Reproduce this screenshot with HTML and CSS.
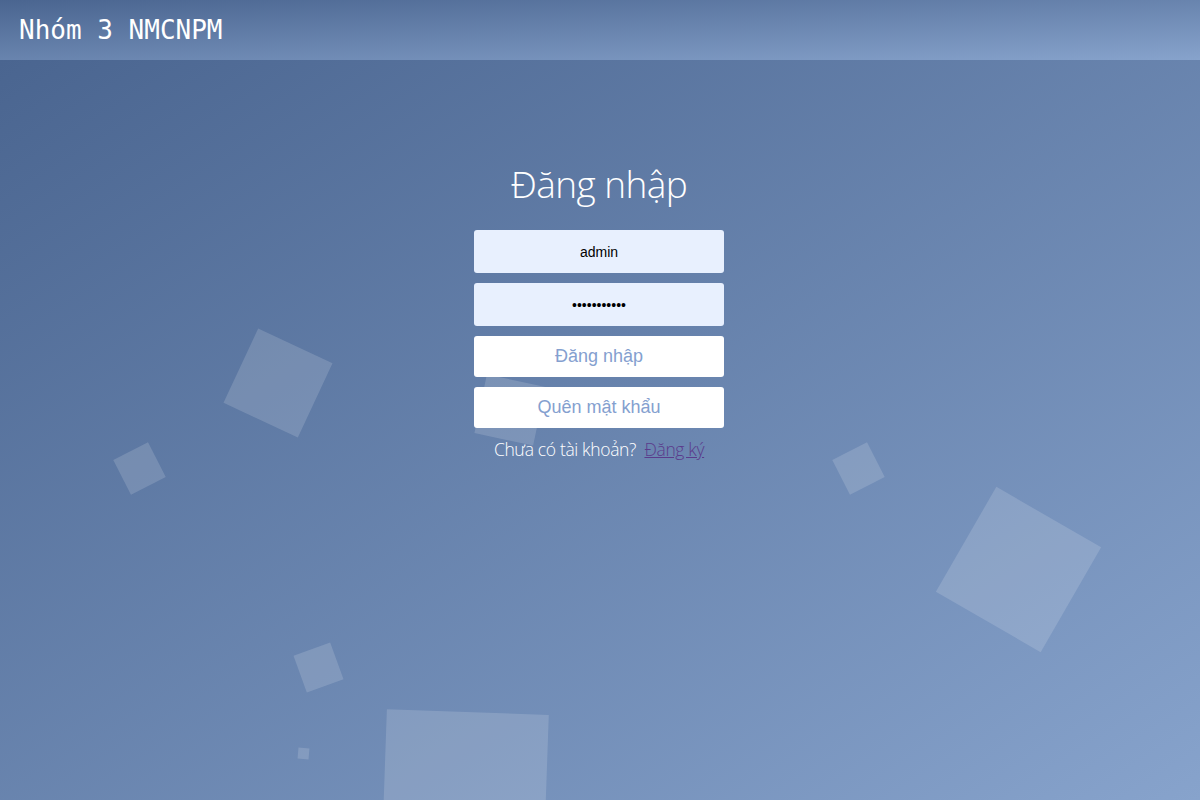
FILE: index.html
```html
<!DOCTYPE html>
<html lang="vi">
<head>
<meta charset="utf-8">
<title>Đăng nhập</title>
<link rel="stylesheet" href="styles.css">
</head>
<body>
<header class="topbar">
  <div class="brand">Nhóm 3 NMCNPM</div>
</header>
<main class="stage">
  <ul class="bubbles">
    <li class="b b1"></li>
    <li class="b b2"></li>
    <li class="b b3"></li>
    <li class="b b4"></li>
    <li class="b b5"></li>
    <li class="b b6"></li>
    <li class="b b7"></li>
    <li class="b b8"></li>
  </ul>
  <section class="login">
    <h1 class="title">Đăng nhập</h1>
    <form class="form">
      <input class="field" type="text" value="admin">
      <input class="field" type="password" value="12345678901">
      <button class="btn" type="button">Đăng nhập</button>
      <button class="btn" type="button">Quên mật khẩu</button>
      <p class="signup">Chưa có tài khoản?&nbsp; <a class="link" href="#">Đăng ký</a></p>
    </form>
  </section>
</main>
</body>
</html>
```
FILE: styles.css
```css
* { box-sizing: border-box; }
html, body { margin: 0; padding: 0; }
body { width: 1200px; height: 800px; overflow: hidden; font-family: "Open Sans", sans-serif; }

.topbar {
  height: 60px;
  background: linear-gradient(to bottom right, #4a6590 0%, #87a3cc 100%);
  display: flex;
  align-items: center;
  padding-left: 19px;
}
.brand {
  font-family: "DejaVu Sans Mono", monospace;
  font-size: 26px;
  color: #ffffff;
}

.stage {
  position: relative;
  height: 740px;
  overflow: hidden;
  background: linear-gradient(to bottom right, #4a6590 0%, #87a3cc 100%);
}

.bubbles { position: absolute; inset: 0; margin: 0; padding: 0; list-style: none; z-index: 0; }
.b { position: absolute; background: rgba(255,255,255,0.15); }
.b1 { left: 237px; top: 282px; width: 82px; height: 82px; transform: rotate(25deg); }
.b2 { left: 120px; top: 389px; width: 39px; height: 39px; transform: rotate(-27deg); }
.b3 { left: 839px; top: 389px; width: 39px; height: 39px; transform: rotate(-27deg); }
.b4 { left: 958px; top: 449px; width: 121px; height: 121px; transform: rotate(30deg); }
.b5 { left: 299px; top: 588px; width: 39px; height: 39px; transform: rotate(-20deg); }
.b6 { left: 298px; top: 688px; width: 11px; height: 11px; transform: rotate(5deg); }
.b7 { left: 384px; top: 652px; width: 162px; height: 162px; transform: rotate(2deg); }
.b8 { left: 480px; top: 320px; width: 60px; height: 60px; transform: rotate(12deg); }

.login {
  position: relative;
  z-index: 1;
  display: flex;
  flex-direction: column;
  align-items: center;
  padding-top: 96px;
  padding-right: 2px;
}
.title {
  margin: 0 0 18px;
  font-family: "Open Sans", sans-serif;
  font-weight: 300;
  font-size: 37px;
  line-height: 56px;
  color: #ffffff;
  letter-spacing: -0.6px;
}
.form { display: flex; flex-direction: column; align-items: center; width: 250px; margin: 0; }
.field {
  width: 250px;
  height: 43px;
  margin: 0 0 10px;
  border: 0;
  border-radius: 3px;
  background: #e8f0fe;
  font-family: "Liberation Sans", Arial, sans-serif;
  font-size: 14px;
  color: #000;
  text-align: center;
  outline: none;
}
.btn {
  width: 250px;
  height: 41px;
  margin: 0 0 10px;
  border: 0;
  border-radius: 3px;
  background: #ffffff;
  color: #84a0cf;
  font-family: "Liberation Sans", Arial, sans-serif;
  font-size: 18px;
  cursor: pointer;
}
.signup {
  margin: -1px 0 0;
  white-space: nowrap;
  font-family: "Open Sans", sans-serif;
  font-weight: 300;
  font-size: 17.5px;
  color: #ffffff;
  letter-spacing: -0.35px;
}
.link { color: #5b3b8c; text-decoration: underline; }
```
